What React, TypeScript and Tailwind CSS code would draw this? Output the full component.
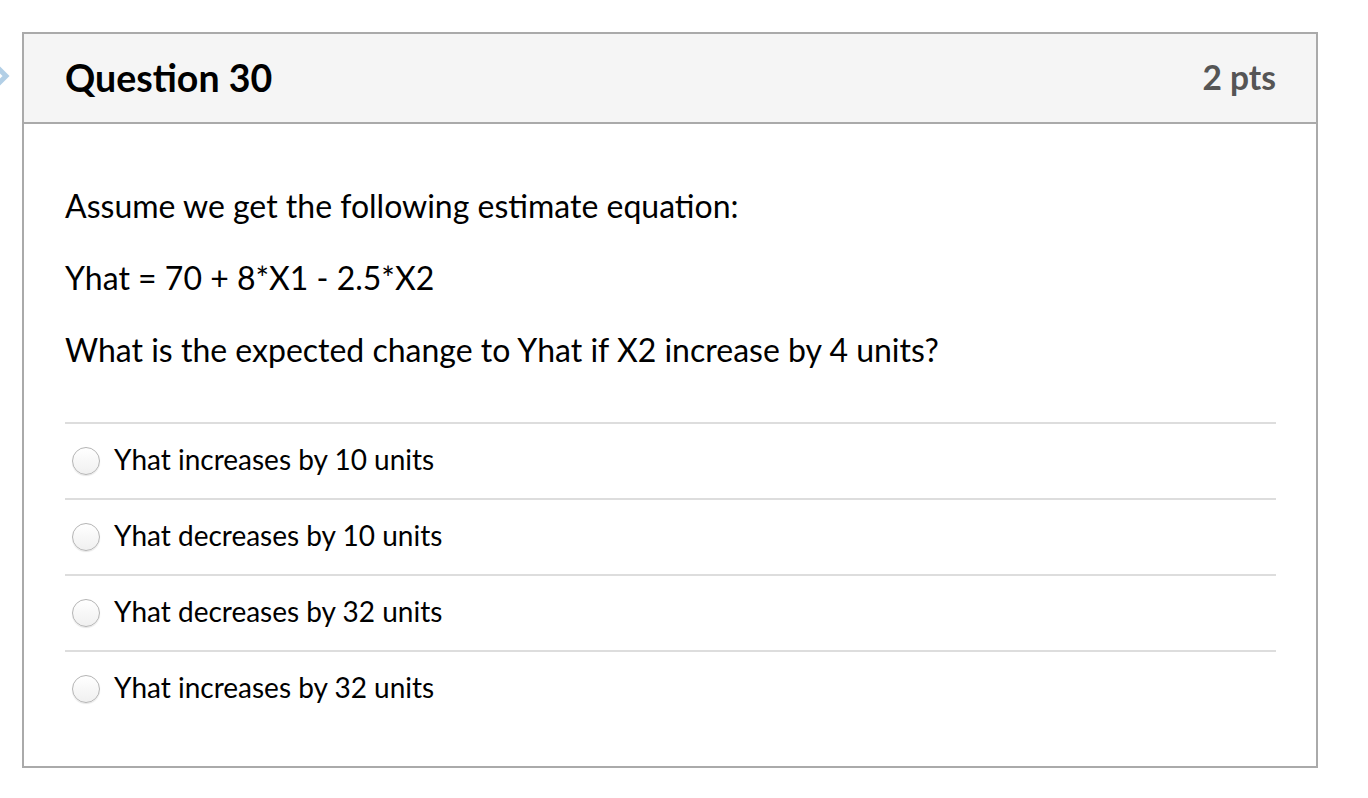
const options = [
  'Yhat increases by 10 units',
  'Yhat decreases by 10 units',
  'Yhat decreases by 32 units',
  'Yhat increases by 32 units',
];

function Radio() {
  return (
    <span className="w-[28px] h-[28px] rounded-full border border-[#b5b5b5] bg-gradient-to-b from-white to-[#f0f0f0] shadow-[0_1px_1px_rgba(0,0,0,0.1)] shrink-0" />
  );
}

export default function App() {
  return (
    <div className="relative w-[1368px] h-[798px] bg-white overflow-hidden font-['Lato','Open_Sans',sans-serif] text-black">
      <svg className="absolute left-[-6px] top-[64px]" width="16" height="24" viewBox="0 0 16 24">
        <path d="M2 2 L12 12 L2 22" fill="none" stroke="#9fc3e0" strokeWidth="5" strokeLinecap="round" opacity="0.8" />
      </svg>
      <div className="ml-[22px] pt-[32px]">
        <div className="w-[1296px] h-[736px] border-2 border-[#aaaaaa] flex flex-col">
          <div className="h-[90px] bg-[#f5f5f5] border-b-2 border-[#aaaaaa] flex items-center justify-between pl-[41px] pr-[40px]">
            <h2 className="text-[37.5px] font-bold leading-none">Question 30</h2>
            <span className="text-[33.5px] font-bold text-[#555555] leading-none">2 pts</span>
          </div>
          <div className="pl-[41px] pr-[40px] pt-[64px]">
            <p className="text-[32px] leading-[36px]">Assume we get the following estimate equation:</p>
            <p className="text-[32px] leading-[36px] mt-[36px]">Yhat = 70 + 8*X1 - 2.5*X2</p>
            <p className="text-[32px] leading-[36px] mt-[36px]">What is the expected change to Yhat if X2 increase by 4 units?</p>
            <div className="mt-[54px]">
              {options.map((o) => (
                <div key={o} className="h-[76px] border-t-2 border-[#dddddd] flex items-center pl-[7px] gap-[14px]">
                  <Radio />
                  <span className="text-[28px] pb-[5px]">{o}</span>
                </div>
              ))}
            </div>
          </div>
        </div>
      </div>
    </div>
  );
}
